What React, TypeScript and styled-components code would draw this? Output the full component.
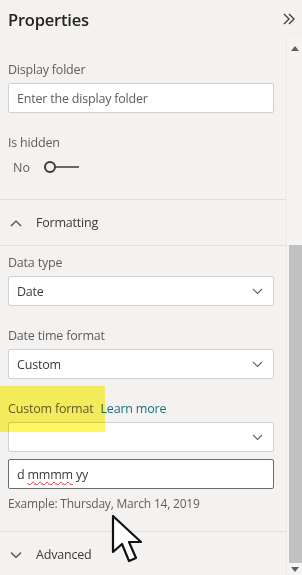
import React from 'react';
import styled, { createGlobalStyle } from 'styled-components';

const Global = createGlobalStyle`
  html, body { margin: 0; padding: 0; background: #f3f2f1; }
  body { font-family: "Open Sans", "Noto Sans", sans-serif; }
`;

const Panel = styled.div`
  position: relative;
  width: 302px;
  height: 575px;
  overflow: hidden;
  background: #f3f2f1;
  display: grid;
  grid-template-columns: 1fr 16px;
  grid-template-rows: 38px 1fr;
`;

const Header = styled.div`
  grid-column: 1 / 3;
  display: flex;
  align-items: center;
  justify-content: space-between;
  padding: 0 6px 0 8px;
`;

const Title = styled.h1`
  margin: 0;
  font-family: "Open Sans", sans-serif;
  font-size: 16.5px;
  font-weight: 600;
  color: #252423;
  letter-spacing: -0.2px;
`;

const Body = styled.div`
  display: flex;
  flex-direction: column;
`;

const Section = styled.div<{ $top?: number; $bottom?: number }>`
  display: flex;
  flex-direction: column;
  padding: ${(p) => p.$top ?? 0}px 12px ${(p) => p.$bottom ?? 0}px 8px;
`;

const Label = styled.div<{ $mt?: number }>`
  font-size: 12.5px;
  color: #605e5c;
  height: 18px;
  line-height: 18px;
  margin-top: ${(p) => p.$mt ?? 0}px;
  margin-bottom: 4px;
  letter-spacing: -0.2px;
`;

const Box = styled.div<{ $focus?: boolean }>`
  height: 30px;
  box-sizing: border-box;
  background: #ffffff;
  border: 1px solid ${(p) => (p.$focus ? '#6d6b69' : '#d2d0ce')};
  border-radius: 2px;
  display: flex;
  align-items: center;
  justify-content: space-between;
  padding: 0 10px 0 8px;
  font-size: 12.5px;
  color: #3b3a39;
  letter-spacing: -0.2px;
`;

const Placeholder = styled.span`
  color: #605e5c;
`;

const Squiggle = styled.span`
  text-decoration: underline wavy #d13438;
  text-decoration-thickness: 1px;
  text-underline-offset: 2px;
`;

const ToggleRow = styled.div`
  display: flex;
  align-items: center;
  gap: 13px;
  height: 22px;
  padding-left: 5px;
  font-size: 12.5px;
  color: #605e5c;
`;

const Divider = styled.div`
  height: 1px;
  background: #e1dfdd;
`;

const GroupHead = styled.div`
  display: flex;
  align-items: center;
  gap: 14px;
  height: 45px;
  padding-left: 10px;
  font-size: 12.5px;
  color: #3b3a39;
  letter-spacing: -0.2px;
`;

const LinkText = styled.span`
  color: #1b6f7d;
  margin-left: 7px;
`;

const Example = styled.div`
  font-size: 12px;
  color: #605e5c;
  margin-top: 6px;
  height: 18px;
  letter-spacing: -0.2px;
`;

const Scroll = styled.div`
  display: flex;
  flex-direction: column;
  align-items: center;
  background: #f5f4f3;
  border-left: 1px solid #ebe9e7;
`;

const Thumb = styled.div`
  width: 14px;
  margin-left: 2px;
  height: 318px;
  background: #c1c1c1;
`;

const Spacer = styled.div<{ $h: number }>`
  height: ${(p) => p.$h}px;
  flex: none;
`;

const Highlight = styled.div`
  position: absolute;
  left: 0;
  top: 386px;
  width: 105px;
  height: 46px;
  background: #fff200;
  opacity: 0.62;
  mix-blend-mode: multiply;
  pointer-events: none;
`;

const Cursor = styled.svg`
  position: absolute;
  left: 111px;
  top: 514px;
  pointer-events: none;
`;

const Chevron = ({ up }: { up?: boolean }) => (
  <svg width="12" height="8" viewBox="0 0 12 8">
    <path d={up ? 'M1 7 L6 2 L11 7' : 'M1 1.5 L6 6.5 L11 1.5'} fill="none" stroke="#484644" strokeWidth="1.2" />
  </svg>
);

const SmallChevron = () => (
  <svg width="11" height="7" viewBox="0 0 11 7">
    <path d="M1 1 L5.5 5.5 L10 1" fill="none" stroke="#605e5c" strokeWidth="1.1" />
  </svg>
);

const Collapse = () => (
  <svg width="14" height="14" viewBox="0 0 14 14">
    <path d="M2 2 L7 7 L2 12 M7 2 L12 7 L7 12" fill="none" stroke="#3b3a39" strokeWidth="1.3" />
  </svg>
);

const Toggle = () => (
  <svg width="38" height="14" viewBox="0 0 38 14">
    <line x1="12" y1="7" x2="36" y2="7" stroke="#3b3a39" strokeWidth="1.5" />
    <circle cx="7" cy="7" r="5" fill="#f3f2f1" stroke="#3b3a39" strokeWidth="2" />
  </svg>
);

const Arrow = ({ down }: { down?: boolean }) => (
  <svg width="8" height="5" viewBox="0 0 8 5">
    <path d={down ? 'M0 0 L8 0 L4 5 Z' : 'M0 5 L8 5 L4 0 Z'} fill="#606060" />
  </svg>
);

export default function App() {
  return (
    <>
      <Global />
      <Panel>
        <Header>
          <Title>Properties</Title>
          <Collapse />
        </Header>
        <Body>
          <Section $top={23}>
            <Label>Display folder</Label>
            <Box>
              <Placeholder>Enter the display folder</Placeholder>
            </Box>
            <Label $mt={21}>Is hidden</Label>
            <ToggleRow>
              No
              <Toggle />
            </ToggleRow>
            <Spacer $h={21} />
          </Section>
          <Divider />
          <GroupHead>
            <Chevron up />
            Formatting
          </GroupHead>
          <Divider />
          <Section $top={8}>
            <Label>Data type</Label>
            <Box>
              Date
              <SmallChevron />
            </Box>
            <Label $mt={21}>Date time format</Label>
            <Box>
              Custom
              <SmallChevron />
            </Box>
            <Label $mt={21}>
              Custom format
              <LinkText>Learn more</LinkText>
            </Label>
            <Box>
              <span />
              <SmallChevron />
            </Box>
            <Spacer $h={7} />
            <Box $focus>
              <span>
                d <Squiggle>mmmm</Squiggle> yy
              </span>
            </Box>
            <Example>Example: Thursday, March 14, 2019</Example>
            <Spacer $h={18} />
          </Section>
          <Divider />
          <GroupHead>
            <Chevron />
            Advanced
          </GroupHead>
        </Body>
        <Scroll>
          <Spacer $h={8} />
          <Arrow />
          <Spacer $h={194} />
          <Thumb />
          <Spacer $h={4} />
          <Arrow down />
        </Scroll>
        <Highlight />
        <Cursor width="34" height="54" viewBox="0 0 34 54">
          <path
            d="M2 2 L2 38 L11 30 L18 47 L25 44 L18 28 L30 28 Z"
            fill="#ffffff"
            stroke="#111111"
            strokeWidth="2.2"
            strokeLinejoin="round"
          />
        </Cursor>
      </Panel>
    </>
  );
}
